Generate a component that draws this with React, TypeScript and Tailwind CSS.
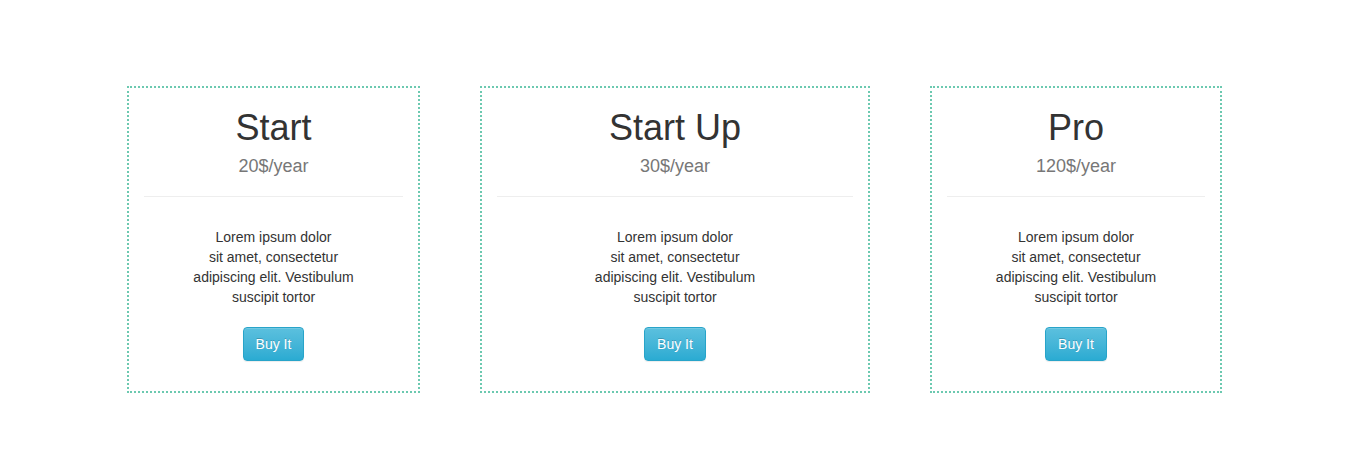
const plans = [
  { name: "Start", price: "20$/year", width: "w-[293px]" },
  { name: "Start Up", price: "30$/year", width: "w-[390px]" },
  { name: "Pro", price: "120$/year", width: "w-[292px]" },
]

function PlanCard({ name, price, width }: { name: string; price: string; width: string }) {
  return (
    <div className={`${width} border-2 border-dotted border-[#6cc9b0] flex flex-col items-center pb-[30px]`}>
      <h1 className="mt-[20px] text-[36px] leading-[40px] text-[#333]">{name}</h1>
      <h4 className="mt-[8px] text-[18px] leading-[20px] text-[#777]">{price}</h4>
      <div className="mt-[20px] self-stretch mx-[15px] h-px bg-[#eee]"></div>
      <p className="mt-[30px] text-[14px] leading-[20px] text-[#333] text-center">
        Lorem ipsum dolor
        <br />
        sit amet, consectetur
        <br />
        adipiscing elit. Vestibulum
        <br />
        suscipit tortor
      </p>
      <button className="mt-[20px] h-[34px] px-[12px] rounded-[4px] border border-[#28a4c9] bg-gradient-to-b from-[#5bc0de] to-[#2aabd2] text-white text-[14px] leading-[20px] [text-shadow:0_-1px_0_rgba(0,0,0,0.2)] shadow-[inset_0_1px_0_rgba(255,255,255,0.15),0_1px_1px_rgba(0,0,0,0.075)]">
        Buy It
      </button>
    </div>
  )
}

export default function App() {
  return (
    <div className="w-full h-[451px] bg-white font-['Liberation_Sans',Arial,sans-serif]">
      <div className="flex items-start gap-[60px] pl-[127px] pt-[86px]">
        {plans.map((p) => (
          <PlanCard key={p.name} {...p} />
        ))}
      </div>
    </div>
  )
}
